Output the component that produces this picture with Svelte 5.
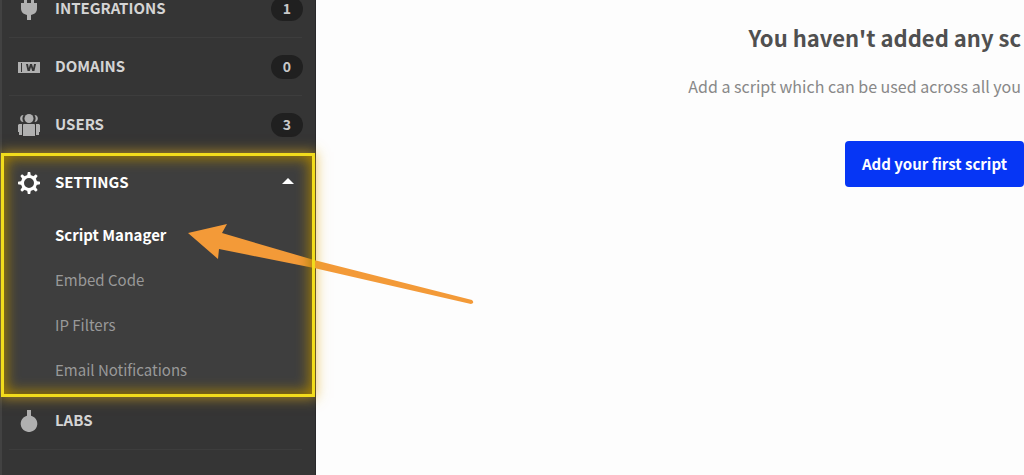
<script>
	const items = [
		{ label: 'Integrations', icon: 'plug', count: 1 },
		{ label: 'Domains', icon: 'domain', count: 0 },
		{ label: 'Users', icon: 'users', count: 3 }
	];

	const settings = ['Script Manager', 'Embed Code', 'IP Filters', 'Email Notifications'];

	let active = $state('Script Manager');
	let open = $state(true);

	const teeth = [0, 45, 90, 135, 180, 225, 270, 315];
</script>

{#snippet icon(name)}
	<svg class="icon" viewBox="0 0 22 22" aria-hidden="true">
		{#if name === 'plug'}
			<path d="M6 0h3v5h4V0h3v5h3v5c0 4-2 6-6 7v5H9v-5c-4-1-6-3-6-7V5h3z" />
		{:else if name === 'domain'}
			<path
				fill-rule="evenodd"
				d="M0 6h22v11H0zM3 7v9h1V7zM8 8l1.600 7h2.200l1.200-4 1.200 4h2.200L18 8h-2l-.8 4L14 8h-2l-1.200 4L10 8z"
			/>
		{:else if name === 'users'}
			<circle cx="11" cy="4.500" r="4.500" />
			<path d="M5.500 1C1 1 1 8 5.500 8 4 6 4 3 5.500 1zM16.500 1c4.500 0 4.500 7 0 7 1.500-2 1.500-5 0-7z" />
			<path d="M6 10h10q1 0 1 1v11H5V11q0-1 1-1zM1 10h3v11H1v-3H0v-7zM18 10h3l1 1v7h-1v3h-3z" />
		{:else if name === 'gear'}
			<circle cx="11" cy="11" r="6.500" fill="none" stroke="currentColor" stroke-width="3" />
			{#each teeth as angle}
				<path d="M9.800 0h2.400l.7 4H9.100z" transform="rotate({angle} 11 11)" />
			{/each}
		{:else if name === 'flask'}
			<path d="M9 0h4v5.700a8.300 8.300 0 1 1-4 0z" />
		{/if}
	</svg>
{/snippet}

<div class="page">
	<aside>
		<nav>
			{#each items as item}
				<a class="row" href="#{item.icon}">
					{@render icon(item.icon)}
					<span class="label">{item.label}</span>
					<span class="badge">{item.count}</span>
				</a>
			{/each}

			<div class="group">
				<button class="row" aria-expanded={open} onclick={() => (open = !open)}>
					{@render icon('gear')}
					<span class="label">Settings</span>
					<span class="caret" class:closed={!open}></span>
				</button>
				{#if open}
					<ul>
						{#each settings as name}
							<li>
								<a href="#settings" class:active={active === name} onclick={() => (active = name)}>{name}</a>
							</li>
						{/each}
					</ul>
				{/if}
				<svg class="arrow" viewBox="0 0 288 82" aria-hidden="true">
					<path d="M1 10 40 1 35 10 127 37 285 77Q288 80 284 81L127 45 32 26 31 36z" />
				</svg>
				<div class="highlight"></div>
			</div>

			<a class="row" href="#labs">
				{@render icon('flask')}
				<span class="label">Labs</span>
			</a>
		</nav>
	</aside>

	<main>
		<h1>You haven't added any sc</h1>
		<p>Add a script which can be used across all you</p>
		<button class="primary">Add your first script</button>
	</main>
</div>

<style>
	:global(body) {
		margin: 0;
		background: #fdfdfd;
	}

	.page {
		display: flex;
		min-height: 100vh;
		overflow: hidden;
		font-family: 'Noto Sans CJK SC', 'Open Sans', sans-serif;
		font-size: 15px;
		line-height: 24px;
	}

	aside {
		flex: 0 0 316px;
		box-sizing: border-box;
		background: #353535;
		border-left: 2px solid #424242;
		border-right: 1px solid #29292b;
	}

	/* the list is scrolled a little, so its first row is cut */
	nav {
		margin-top: -20px;
	}

	.row {
		display: flex;
		align-items: center;
		box-sizing: border-box;
		width: 100%;
		height: 58px;
		padding: 0 12px 0 16px;
		border: 0;
		background: linear-gradient(#3d3d3d, #3d3d3d) 7px 100% / calc(100% - 20px) 1px no-repeat;
		color: #d4d4d4;
		font: inherit;
		font-weight: 700;
		text-align: left;
		text-decoration: none;
		text-transform: uppercase;
	}

	.icon {
		width: 22px;
		height: 22px;
		margin-right: 15px;
		fill: currentColor;
		color: #b0b0b0;
	}

	.label {
		flex: 1;
		padding-bottom: 2px;
	}

	.badge {
		width: 32px;
		padding-bottom: 2px;
		border-radius: 12px;
		background: #202020;
		color: #c8c8c8;
		font-size: 14px;
		line-height: 22px;
		text-align: center;
	}

	.group {
		position: relative;
		background: #3e3e3e;
	}

	.group .row {
		background: none;
		color: #fff;
		cursor: pointer;
	}

	.group .icon {
		color: #fff;
	}

	.caret {
		margin: 0 9px 4px;
		border: 6px solid transparent;
		border-top: 0;
		border-bottom-color: #fff;
	}

	.caret.closed {
		transform: rotate(180deg);
	}

	ul {
		margin: 0;
		padding: 0 0 0 53px;
		list-style: none;
	}

	li a {
		display: block;
		color: #999;
		line-height: 45px;
		text-decoration: none;
	}

	li a.active {
		color: #fff;
		font-weight: 700;
	}

	.arrow {
		position: absolute;
		top: 69px;
		left: 185px;
		width: 288px;
		height: 82px;
		fill: #f39a38;
		pointer-events: none;
	}

	.highlight {
		position: absolute;
		inset: -1px 0 -5px -1px;
		border: 3px solid #f2dc1c;
		box-shadow:
			0 0 12px 1px #e0ac1cb0,
			inset 0 0 14px 2px #a88200;
		pointer-events: none;
	}

	main {
		flex: 1;
		min-width: 0;
		display: flex;
		flex-direction: column;
		align-items: flex-end;
		color: #888;
		white-space: nowrap;
	}

	h1,
	p {
		padding-right: 3px;
	}

	h1 {
		margin: 21px 0 0;
		color: #505050;
		font-size: 22px;
		line-height: 32px;
	}

	p {
		margin: 21px 0 43px;
		font-size: 16px;
	}

	.primary {
		padding: 11px 17px;
		border: 0;
		border-radius: 4px;
		background: #0636f5;
		color: #fff;
		font: inherit;
		font-weight: 700;
		cursor: pointer;
	}
</style>
